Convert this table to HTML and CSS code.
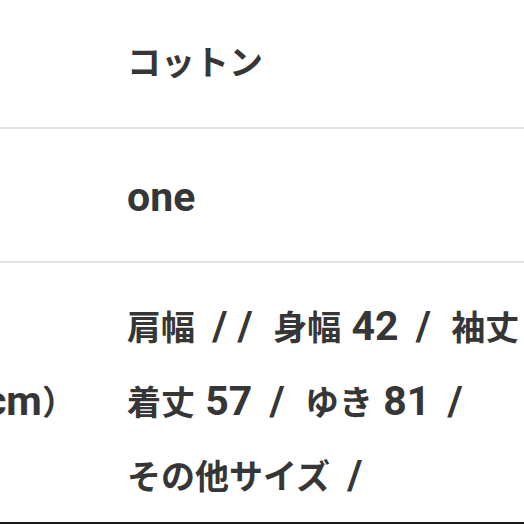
FILE: index.html
```html
<!DOCTYPE html>
<html lang="ja">
<head>
<meta charset="utf-8">
<title>商品詳細</title>
<link rel="stylesheet" href="styles.css">
</head>
<body>
<div class="sheet">
  <div class="row row-material">
    <div class="label">素材</div>
    <div class="value">コットン</div>
  </div>
  <div class="row row-size">
    <div class="label">サイズ</div>
    <div class="value"><span class="en">one</span></div>
  </div>
  <div class="row row-measure">
    <div class="label">サイズ（<span class="en">cm</span>）</div>
    <div class="value">
      <div class="line">肩幅<span class="en"> <span class="sep">/ /</span>  </span>身幅<span class="en"> 42 <span class="sep">/</span>  </span>袖丈<span class="en"> 60 <span class="sep">/</span></span></div>
      <div class="line">着丈<span class="en"> 57 <span class="sep">/</span>  </span>ゆき<span class="en"> 81 <span class="sep">/</span></span></div>
      <div class="line">その他サイズ<span class="en"> <span class="sep">/</span></span></div>
    </div>
  </div>
</div>
</body>
</html>
```

FILE: styles.css
```css
html, body {
  margin: 0;
  padding: 0;
  background: #ffffff;
}

body {
  width: 524px;
  height: 524px;
  overflow: hidden;
  font-family: "Noto Sans CJK JP", "Roboto", sans-serif;
  font-weight: 700;
  font-size: 34px;
  color: #363636;
}

.sheet {
  height: 522px;
  border-bottom: 2px solid #1a1a1a;
  overflow: hidden;
}

.row {
  display: flex;
  align-items: center;
  border-bottom: 2px solid #e3e3e3;
}

.row-material {
  padding: 41px 0 46px;
  line-height: 40px;
}

.row-size {
  padding: 48px 0 44px;
  line-height: 40px;
}

.row-measure {
  padding: 26px 0 30px;
  line-height: 74.5px;
  border-bottom: none;
}

.label {
  flex: 0 0 auto;
  width: 277px;
  margin-left: -150px;
  white-space: nowrap;
}

.value {
  flex: 1 1 auto;
  white-space: nowrap;
}

.line {
  white-space: pre;
}

.en {
  font-family: "Roboto", "Noto Sans CJK JP", sans-serif;
  font-size: 41px;
}

.sep {
  margin-left: 7px;
}
```
